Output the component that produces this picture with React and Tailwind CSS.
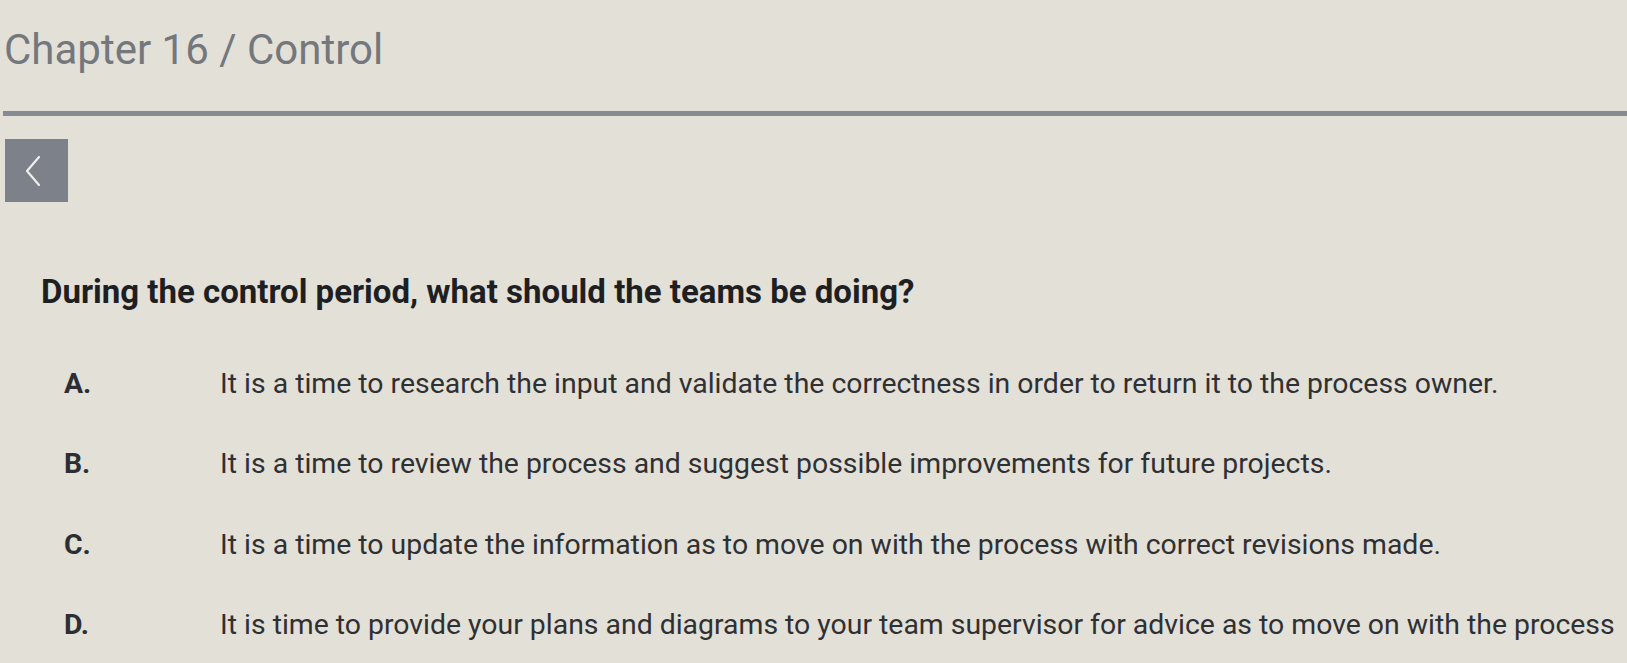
import React from "react";

const options = [
  { label: "A.", text: "It is a time to research the input and validate the correctness in order to return it to the process owner." },
  { label: "B.", text: "It is a time to review the process and suggest possible improvements for future projects." },
  { label: "C.", text: "It is a time to update the information as to move on with the process with correct revisions made." },
  { label: "D.", text: "It is time to provide your plans and diagrams to your team supervisor for advice as to move on with the process" },
];

const App = () => {
  return (
    <div className="w-full h-[663px] overflow-hidden bg-[#e3e0d8] font-['Roboto',_'Liberation_Sans',_sans-serif]">
      <h1 className="pl-[4px] pt-[29px] text-[42px] leading-none font-normal text-[#74777c] whitespace-nowrap">
        Chapter 16 / Control
      </h1>

      <div className="mt-[40px] ml-[3px] h-[5px] bg-[#868a91]" />

      <button className="mt-[23px] ml-[5px] w-[63px] h-[63px] bg-[#7d8189] flex items-center justify-center">
        <svg width="20" height="34" viewBox="0 0 20 34" fill="none" className="-ml-[8px]">
          <path d="M16 3 L4 17 L16 31" stroke="#eeeeee" strokeWidth="2.2" strokeLinecap="round" strokeLinejoin="round" />
        </svg>
      </button>

      <h2 className="mt-[73px] ml-[41px] text-[33px] leading-none font-bold text-[#1e1f22] whitespace-nowrap">
        During the control period, what should the teams be doing?
      </h2>

      <div className="mt-[62px] flex flex-col gap-[52px]">
        {options.map((option) => (
          <div key={option.label} className="flex items-baseline text-[28.4px] leading-none whitespace-nowrap">
            <span className="ml-[64px] w-[156px] shrink-0 font-bold text-[#2b2e33]">{option.label}</span>
            <span className="text-[#2f3033]">{option.text}</span>
          </div>
        ))}
      </div>
    </div>
  );
};

export default App;
